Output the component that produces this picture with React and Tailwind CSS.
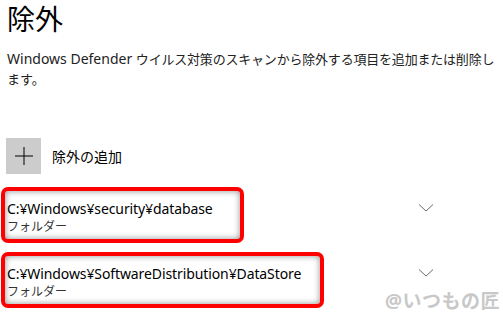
import React from 'react';

const font = { fontFamily: '"Noto Sans", "Noto Sans CJK JP", sans-serif' };

const Chevron = () => (
  <svg width="16" height="10" viewBox="0 0 16 10" className="shrink-0 self-start mt-[16px]">
    <path d="M1 1.5 L8 8 L15 1.5" fill="none" stroke="#6b6b6b" strokeWidth="1" />
  </svg>
);

const ExclusionRow = ({ path, type, boxWidth, className = '' }) => (
  <div className={`flex w-[434px] ${className}`}>
    <div
      className={`${boxWidth} border-[4px] border-[#ff0000] rounded-[7px] shadow-[inset_0_0_6px_rgba(0,0,0,0.45)] pl-[2px] pt-[8px] pb-[4px] flex flex-col`}
    >
      <span className="text-[14px] leading-[20px] text-black tracking-[-0.1px]">{path}</span>
      <span className="text-[12px] leading-[16px] text-[#333]">{type}</span>
    </div>
    <div className="flex-1" />
    <Chevron />
  </div>
);

export default function App() {
  return (
    <div className="w-[503px] h-[320px] bg-white overflow-hidden relative" style={font}>
      <div className="pl-[7px] pt-[1px]">
        <h1 className="text-[28px] leading-[36px] font-normal text-black">除外</h1>
        <p className="mt-[12px] text-[14px] leading-[20px] text-[#222] whitespace-nowrap">
          Windows Defender{' '}
          <span className="text-[13px] tracking-[-0.2px]">
            ウイルス対策のスキャンから除外する項目を追加または削除し
          </span>
          <br />
          <span className="text-[13px]">ます。</span>
        </p>
      </div>

      <div className="mt-[49px] pl-[6px] flex items-center gap-[11px]">
        <div className="w-[35px] h-[36px] bg-[#cccccc] flex items-center justify-center">
          <svg width="18" height="18" viewBox="0 0 18 18">
            <path d="M9 0 V18 M0 9 H18" stroke="#000" strokeWidth="1" />
          </svg>
        </div>
        <span className="text-[14px] text-black">除外の追加</span>
      </div>

      <ExclusionRow
        className="mt-[13px] pl-px"
        boxWidth="w-[243px]"
        path="C:¥Windows¥security¥database"
        type="フォルダー"
      />
      <ExclusionRow
        className="mt-[9px] pl-px"
        boxWidth="w-[323px]"
        path="C:¥Windows¥SoftwareDistribution¥DataStore"
        type="フォルダー"
      />

      <div className="absolute right-[3px] bottom-[5px] text-[19px] font-bold text-[#c8c8c8] tracking-[0.5px]">
        @いつもの匠
      </div>
    </div>
  );
}
